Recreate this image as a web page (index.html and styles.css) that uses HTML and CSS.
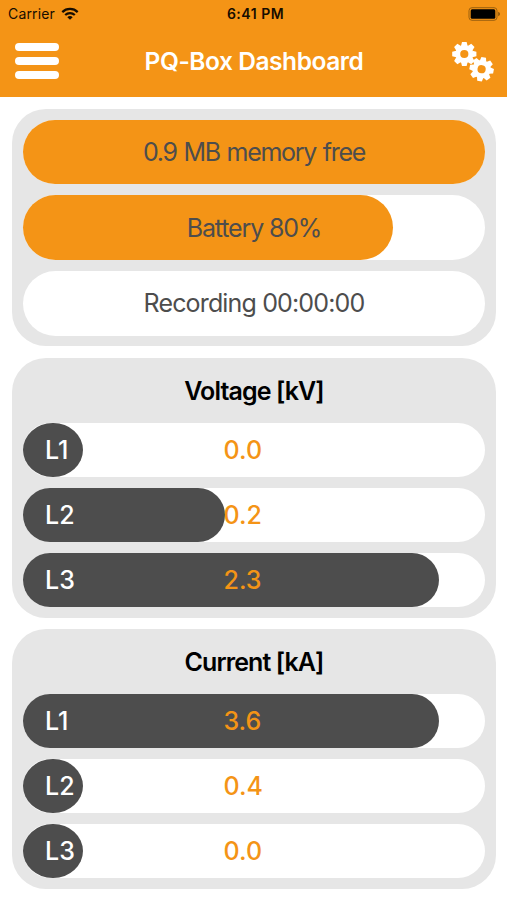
FILE: index.html
```html
<!DOCTYPE html>
<html lang="en">
<head>
<meta charset="utf-8">
<title>PQ-Box Dashboard</title>
<link rel="stylesheet" href="styles.css">
</head>
<body>
<header class="header">
  <div class="status">
    <div class="carrier"><span>Carrier</span>
      <svg class="wifi" width="18" height="13" viewBox="0 0 18 13"><g fill="none" stroke="#160d00" stroke-width="2.2"><path d="M1.3 5.1a11 11 0 0 1 15.4 0"/><path d="M4.2 8a6.9 6.9 0 0 1 9.6 0"/></g><path fill="#160d00" d="M6.3 10.2a3.9 3.9 0 0 1 5.4 0L9 12.7z"/></svg>
    </div>
    <div class="time">6:41 PM</div>
    <svg class="battery" width="33" height="14" viewBox="0 0 33 14"><rect x="1" y=".7" width="28" height="12.6" rx="3" fill="none" stroke="#9b600f" stroke-width="1"/><rect x="2.7" y="2.3" width="24.6" height="9.4" rx="1.5" fill="#000"/><path d="M30.3 4.8q1.6 1 1.6 2.2t-1.6 2.2z" fill="#7a4a08"/></svg>
  </div>
  <div class="navbar">
    <div class="menu"><i></i><i></i><i></i></div>
    <h1 class="title">PQ-Box Dashboard</h1>
    <svg class="gears" width="44" height="42" viewBox="0 0 44 42">
      <defs><g id="gear"><circle r="6.6" fill="none" stroke="#fff" stroke-width="5"/><g id="teeth" fill="#fff"><path id="tooth" d="M-3.3-8 -2.3-12.1H2.3L3.3-8z"/><use href="#tooth" transform="rotate(45)"/><use href="#tooth" transform="rotate(90)"/><use href="#tooth" transform="rotate(135)"/><use href="#tooth" transform="rotate(180)"/><use href="#tooth" transform="rotate(225)"/><use href="#tooth" transform="rotate(270)"/><use href="#tooth" transform="rotate(315)"/></g></g></defs>
      <use href="#gear" transform="translate(13.3 14)"/><use href="#gear" transform="translate(30.6 29.2) rotate(10)"/>
    </svg>
  </div>
</header>
<main class="cards">
  <section class="card">
    <div class="bar info"><div class="fill full"></div><span class="memory">0.9 MB memory free</span></div>
    <div class="bar info"><div class="fill charge"></div><span class="charge-text">Battery 80%</span></div>
    <div class="bar info"><span class="recording">Recording 00:00:00</span></div>
  </section>
  <section class="card">
    <h2>Voltage [kV]</h2>
    <div class="bar phase"><div class="fill low"></div><b>L1</b><em>0.0</em></div>
    <div class="bar phase"><div class="fill mid"></div><b>L2</b><em>0.2</em></div>
    <div class="bar phase"><div class="fill high"></div><b>L3</b><em>2.3</em></div>
  </section>
  <section class="card">
    <h2>Current [kA]</h2>
    <div class="bar phase"><div class="fill high"></div><b>L1</b><em>3.6</em></div>
    <div class="bar phase"><div class="fill low"></div><b>L2</b><em>0.4</em></div>
    <div class="bar phase"><div class="fill low"></div><b>L3</b><em>0.0</em></div>
  </section>
</main>
</body>
</html>
```
FILE: styles.css
```css
* { box-sizing: border-box; }
body { margin: 0; height: 900px; overflow: hidden; background: #fff; font-family: Inter, "Liberation Sans", sans-serif; }
.header { height: 97.3px; background: #f49416; }
.status { height: 27px; display: grid; grid-template-columns: 1fr auto 1fr; align-items: center; padding: 0 6px 0 8px; color: #160d00; font-size: 14px; }
.carrier { display: flex; align-items: center; gap: 6px; letter-spacing: .15px; }
.time { font-weight: 600; font-size: 14px; letter-spacing: .5px; padding-left: 2px; }
.battery { justify-self: end; }
.navbar { height: 70px; display: flex; justify-content: space-between; align-items: center; padding: 0 12px 2px 15px; }
.menu { display: grid; gap: 6.3px; width: 44px; }
.menu i { height: 8px; border-radius: 4px; background: #fff; }
.title { margin: 0 2px 0 0; font-size: 24.5px; font-weight: 600; color: #fff; white-space: nowrap; letter-spacing: -.45px; }
.cards { display: grid; gap: 11.4px; padding: 11.7px 11px 0 12px; }
.card { background: #e6e6e6; border-radius: 34px; padding: 10.8px 11px; display: grid; gap: 11px; }
.card h2 { margin: 0 0 -11px; height: 54.1px; line-height: 45px; text-align: center; font-size: 25px; font-weight: 600; letter-spacing: -.9px; color: #000; }
.bar { position: relative; background: #fff; border-radius: 33px; display: flex; align-items: center; font-size: 25px; }
.info { height: 64.6px; justify-content: center; color: #4d4d4d; }
.bar span, .bar b, .bar em { position: relative; white-space: nowrap; }
.memory { letter-spacing: -1.3px; word-spacing: 1px; }
.charge-text { letter-spacing: -1.15px; }
.recording { letter-spacing: -.85px; }
.fill { position: absolute; left: 0; top: 0; bottom: 0; border-radius: 33px; background: #4d4d4d; }
.info .fill { background: #f49416; }
.full { width: 100%; }
.charge { width: 80%; }
.fill.low { width: 59.5px; border-radius: 50%; }
.mid { width: 202px; }
.high { width: 90%; }
.phase { height: 54.1px; padding-left: 22px; }
.phase b { width: 178.5px; font-weight: 500; color: #fff; }
.phase em { font-style: normal; font-weight: 500; color: #f49416; }
```
